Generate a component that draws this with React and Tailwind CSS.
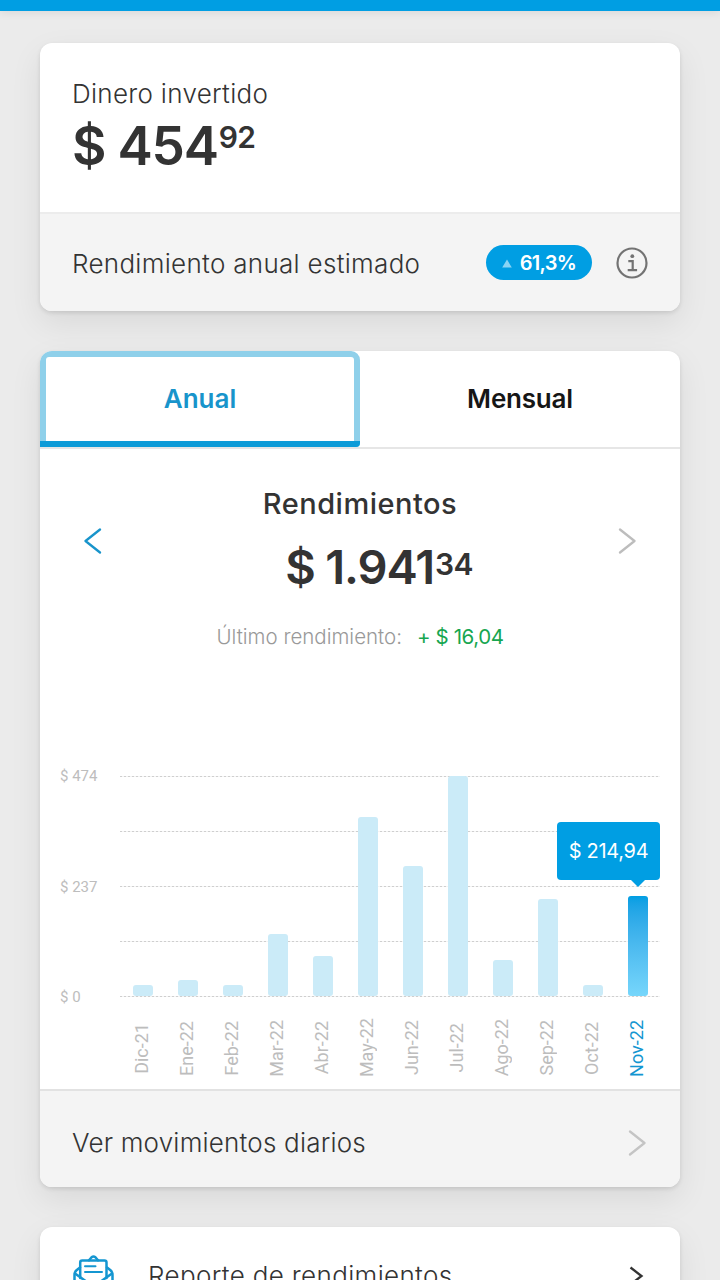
const months = [
  { label: "Dic-21", height: 11 },
  { label: "Ene-22", height: 16 },
  { label: "Feb-22", height: 11 },
  { label: "Mar-22", height: 62.5 },
  { label: "Abr-22", height: 40 },
  { label: "May-22", height: 179 },
  { label: "Jun-22", height: 130.5 },
  { label: "Jul-22", height: 220 },
  { label: "Ago-22", height: 36 },
  { label: "Sep-22", height: 97 },
  { label: "Oct-22", height: 11 },
  { label: "Nov-22", height: 100, active: true },
];

const cardShadow =
  "shadow-[0_12px_32px_rgba(0,0,0,0.08),0_2px_4px_rgba(0,0,0,0.11)]";

function Chevron({ className, flip }) {
  return (
    <svg
      className={className}
      width="18"
      height="26"
      viewBox="0 0 18 26"
      fill="none"
      stroke="currentColor"
      strokeWidth="2.3"
      strokeLinecap="round"
      strokeLinejoin="round"
    >
      <path d={flip ? "M16 1.5 1.5 13 16 24.5" : "M2 1.5 16.5 13 2 24.5"} />
    </svg>
  );
}

function InfoIcon() {
  return (
    <svg width="32" height="32" viewBox="0 0 32 32" fill="none" stroke="#737373">
      <circle cx="16" cy="16" r="14.5" strokeWidth="2.2" />
      <circle cx="16.3" cy="9.2" r="1.9" fill="#737373" stroke="none" />
      <path d="M12.3 14.2h4.400v9M11.700 23.2h9.400" strokeWidth="2.2" />
    </svg>
  );
}

function MailIcon() {
  return (
    <svg
      width="42"
      height="42"
      viewBox="0 0 42 42"
      fill="none"
      stroke="#1496d1"
      strokeWidth="2.5"
      strokeLinecap="round"
      strokeLinejoin="round"
    >
      <path d="M8.2 23V7.500Q8.2 5.500 10.200 5.500H32.500Q34.500 5.500 34.500 7.500V23" />
      <path d="M17 5.300 19.600 2.300Q21.500 .6 23.400 2.300L26 5.300" />
      <path d="M13 11.300h10.500M13 17.100h17" strokeWidth="2" />
      <path d="M8 12.500 4.500 15.300Q2.500 17 2.500 19.500V36Q2.500 40 6.500 40H36.500Q40.500 40 40.500 36V19.500Q40.500 17 38.500 15.300L35 12.500" />
      <path d="M3 18.500 18.500 29.500Q21.500 31.500 24.500 29.500L40 18.500" />
    </svg>
  );
}

function Summary() {
  return (
    <section className={`h-[268px] overflow-hidden rounded-xl bg-white ${cardShadow}`}>
      <div className="h-[171px] border-b-2 border-[#ececec] px-8 pt-8">
        <p className="text-[26px] leading-[38px] font-[350] tracking-[0.3px]">Dinero invertido</p>
        <p className="flex items-start text-[53px] leading-[67px] font-semibold">
          <span className="tracking-[-1.2px]">$ 454</span>
          <sup className="top-0 pt-[7px] pl-px text-[30px] leading-[34px] font-semibold tracking-[-0.6px]">92</sup>
        </p>
      </div>
      <div className="flex h-[97px] items-center bg-[#f4f4f4] px-8">
        <span className="pt-0.5 text-[26px] leading-8 font-[350] tracking-[0.3px]">
          Rendimiento anual estimado
        </span>
        <span className="ml-auto flex h-[35px] w-[106px] items-center justify-center gap-2 rounded-full bg-[#009ee3] text-[20px] font-semibold tracking-[-0.7px] text-white">
          <svg className="mt-0.5" width="10" height="9" viewBox="0 0 10 9" fill="#8ad4f4">
            <path d="M5 .5 9.800 8.500H.2Z" />
          </svg>
          61,3%
        </span>
        <button className="ml-6">
          <InfoIcon />
        </button>
      </div>
    </section>
  );
}

function Chart() {
  return (
    <div className="mt-[113px] flex px-5">
      <div className="flex h-[241px] w-[60px] flex-col justify-between font-['Roboto',sans-serif] text-[15px] leading-5 text-[#bdbdbd]">
        <span>$ 474</span>
        <span>$ 237</span>
        <span>$ 0</span>
      </div>
      <div className="w-[540px] pt-[10px]">
        <div className="relative h-[221px]">
          <div className="flex h-full flex-col justify-between">
            {[0, 1, 2, 3, 4].map((line) => (
              <div
                key={line}
                className="h-px bg-[repeating-linear-gradient(90deg,#cfcfcf_0_2px,#f4f4f4_2px_4px)]"
              />
            ))}
          </div>
          <div className="absolute inset-0 grid grid-cols-12 items-end justify-items-center pb-px">
            {months.map((month) => (
              <div
                key={month.label}
                className={
                  month.active
                    ? "w-5 rounded-[3px] bg-linear-to-b from-[#009ee3] to-[#76d6fb]"
                    : "w-5 rounded-[3px] bg-[#cbebf8]"
                }
                style={{ height: month.height }}
              />
            ))}
          </div>
          <div className="absolute top-[46px] right-0 flex h-[58px] w-[103px] items-center justify-center rounded-[4px] bg-[#009ee3] text-[20px] tracking-[-0.3px] text-white">
            $ 214,94
            <svg className="absolute top-[57px] right-[14px]" width="16" height="8" fill="#009ee3">
              <path d="M0 0H16L8 8Z" />
            </svg>
          </div>
        </div>
        <div className="mt-[17px] grid h-[68px] grid-cols-12 place-items-center pr-px font-['Roboto',sans-serif] text-[18px] leading-5 text-[#bdbdbd]">
          {months.map((month) => (
            <span
              key={month.label}
              className={
                month.active
                  ? "rotate-180 text-[#1496d1] [writing-mode:vertical-rl]"
                  : "rotate-180 [writing-mode:vertical-rl]"
              }
            >
              {month.label}
            </span>
          ))}
        </div>
      </div>
    </div>
  );
}

function Earnings() {
  return (
    <section className={`mt-10 flex h-[836px] flex-col overflow-hidden rounded-xl bg-white ${cardShadow}`}>
      <div className="grid h-[98px] shrink-0 grid-cols-2 border-b-2 border-[#e6e6e6] text-[26px] font-semibold">
        <button className="relative h-24 rounded-t-[9px] rounded-b-[4px] border-[6px] border-[#8fd0ea] pb-px text-[#1894cb]">
          Anual
          <span className="absolute -inset-x-1.5 -bottom-1.5 h-1.5 rounded-br-[4px] bg-[#0d9bd8]" />
        </button>
        <button className="pb-px tracking-[-0.2px] text-[#161616]">Mensual</button>
      </div>

      <div className="flex shrink-0 justify-between px-[43px] pt-[31px] text-center">
        <Chevron className="mt-[48px] ml-px text-[#1894cb]" flip />
        <div className="flex flex-col items-center">
          <h2 className="text-[29px] leading-[48px] font-medium tracking-[0.5px]">Rendimientos</h2>
          <p className="ml-[38px] flex items-start pt-2 text-[47px] leading-[62px] font-semibold">
            <span className="tracking-[-1.1px]">$ 1.941</span>
            <sup className="top-0 pt-[11px] pl-px text-[30px] leading-[34px] font-semibold tracking-[-0.6px]">34</sup>
          </p>
          <p className="flex gap-[15px] pt-[23px] text-[20.5px] leading-8 font-[350] text-[#999999]">
            <span>Último rendimiento:</span>
            <span className="font-normal tracking-[-0.4px] text-[#17a650]">+ $ 16,04</span>
          </p>
        </div>
        <Chevron className="mt-[48px] mr-px text-[#bdbdbd]" />
      </div>

      <Chart />

      <a className="mt-auto flex h-[98px] shrink-0 items-center justify-between border-t-2 border-[#e2e2e2] bg-[#f4f4f4] pt-2 pr-[34px] pl-8">
        <span className="text-[26px] leading-8 font-[350] tracking-[0.2px]">Ver movimientos diarios</span>
        <Chevron className="text-[#c4c4c4]" />
      </a>
    </section>
  );
}

function App() {
  return (
    <div className="h-[1280px] w-[720px] overflow-hidden bg-[#ebebeb] font-['Inter',sans-serif] text-[#333333]">
      <header className="h-[11px] bg-[#009ee3] shadow-[0_2px_8px_rgba(0,0,0,0.08)]" />
      <main className="px-10 pt-8">
        <Summary />
        <Earnings />
        <section className={`mt-10 flex h-[97px] items-center rounded-xl bg-white px-8 ${cardShadow}`}>
          <MailIcon />
          <span className="ml-[34px] text-[26px] leading-8 font-[350] tracking-[0.35px]">
            Reporte de rendimientos
          </span>
          <svg
            className="mr-1 ml-auto"
            width="15"
            height="20"
            viewBox="0 0 15 20"
            fill="none"
            stroke="#333333"
            strokeWidth="2.3"
          >
            <path d="M1.500 1.500 12.500 10 1.500 18.500" />
          </svg>
        </section>
      </main>
    </div>
  );
}

export default App;
